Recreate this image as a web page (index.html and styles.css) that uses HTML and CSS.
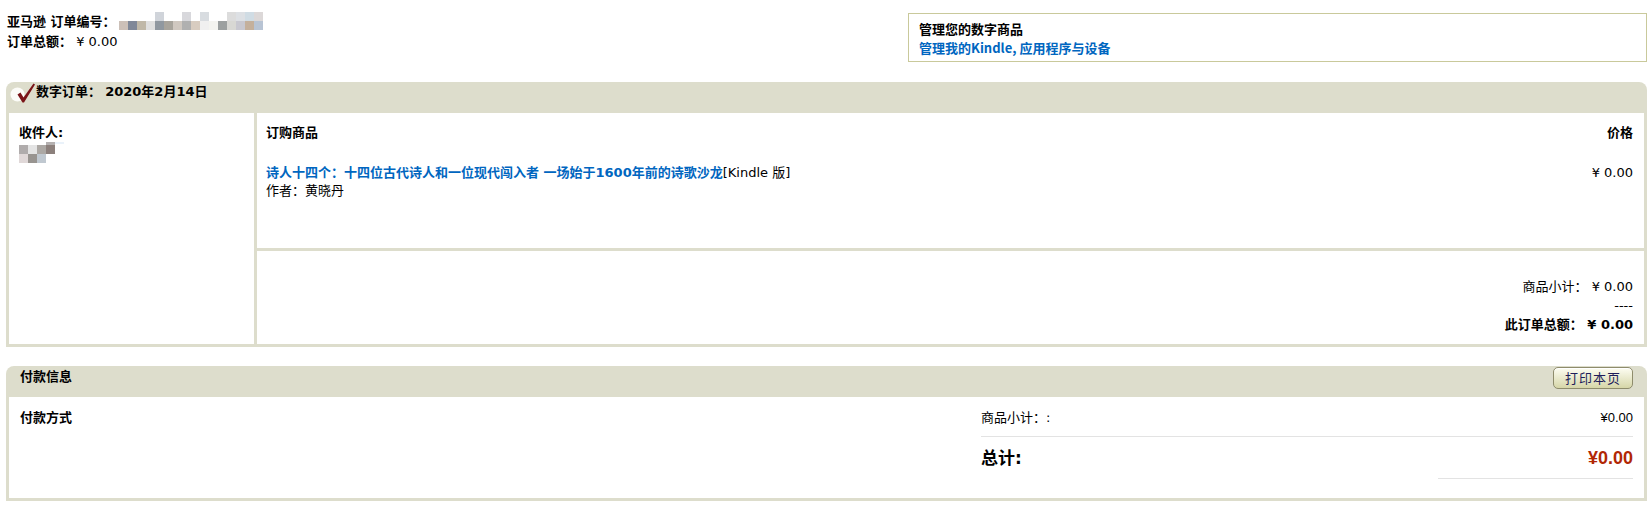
FILE: index.html
```html
<!DOCTYPE html>
<html lang="zh-CN">
<head>
    <meta charset="UTF-8">
    <title>订单详情</title>
    <link rel="stylesheet" href="styles.css">
</head>
<body>

    <div class="top">
        <div class="order-info">
            <div>
                <b>亚马逊 订单编号：</b><svg class="mosaic-order" width="144" height="18" viewBox="0 0 144 18">
                    <rect x="36" y="0" width="9" height="9" fill="#d0d4da"/>
                    <rect x="63" y="0" width="9" height="9" fill="#d8d8dc"/>
                    <rect x="81" y="0" width="9" height="9" fill="#d8dce0"/>
                    <rect x="108" y="0" width="9" height="9" fill="#dcdcdc"/>
                    <rect x="117" y="0" width="9" height="9" fill="#dde0e4"/>
                    <rect x="126" y="0" width="9" height="9" fill="#d0dce4"/>
                    <rect x="135" y="0" width="9" height="9" fill="#dcd8d8"/>
                    <rect x="0" y="9" width="9" height="9" fill="#ccc0b8"/>
                    <rect x="9" y="9" width="9" height="9" fill="#808898"/>
                    <rect x="18" y="9" width="9" height="9" fill="#c0b8a8"/>
                    <rect x="27" y="9" width="9" height="9" fill="#e0e0e0"/>
                    <rect x="36" y="9" width="9" height="9" fill="#9098a0"/>
                    <rect x="45" y="9" width="9" height="9" fill="#a8a49c"/>
                    <rect x="54" y="9" width="9" height="9" fill="#d0c8c0"/>
                    <rect x="63" y="9" width="9" height="9" fill="#b0b0b0"/>
                    <rect x="72" y="9" width="9" height="9" fill="#d8ccc0"/>
                    <rect x="81" y="9" width="9" height="9" fill="#f0f0f0"/>
                    <rect x="90" y="9" width="9" height="9" fill="#f4f4f0"/>
                    <rect x="99" y="9" width="9" height="9" fill="#9ca0a0"/>
                    <rect x="108" y="9" width="9" height="9" fill="#d8d8d4"/>
                    <rect x="117" y="9" width="9" height="9" fill="#c8c8d0"/>
                    <rect x="126" y="9" width="9" height="9" fill="#c4b09c"/>
                    <rect x="135" y="9" width="9" height="9" fill="#b8c4d4"/>
                </svg>
            </div>
            <div><b>订单总额：</b> ¥ 0.00</div>
        </div>
        <div class="manage-box">
            <div class="manage-title">管理您的数字商品</div>
            <a href="#">管理我的Kindle, 应用程序与设备</a>
        </div>
    </div>

    <div class="panel">
        <div class="panel-head">
            <svg class="check" width="25" height="22" viewBox="0 0 25 22">
                <circle cx="7.5" cy="12.5" r="7" fill="#fcfcf8"/>
                <path d="M7.5 12.5 L10.5 10.5 L13.5 15.5 L23.5 1.5 L25 2.5 L14 20.5 L12.5 20.5 Z" fill="#7a1418"/>
            </svg>
            <b>数字订单：</b>&nbsp;<b>2020年2月14日</b>
        </div>
        <div class="order-body">
            <div class="recipient">
                <b>收件人:</b>
                <svg class="mosaic-name" width="45" height="21" viewBox="0 0 45 21">
                    <rect x="27" y="0" width="9" height="3" fill="#b4b0b0"/>
                    <rect x="36" y="0" width="9" height="2" fill="#eaf2fa"/>
                    <rect x="0" y="3" width="9" height="9" fill="#b0acac"/>
                    <rect x="9" y="3" width="9" height="9" fill="#e4e4e4"/>
                    <rect x="18" y="3" width="9" height="9" fill="#aca8a4"/>
                    <rect x="27" y="3" width="9" height="9" fill="#8c807c"/>
                    <rect x="0" y="12" width="9" height="9" fill="#e0d8d8"/>
                    <rect x="9" y="12" width="9" height="9" fill="#989490"/>
                    <rect x="18" y="12" width="9" height="9" fill="#c0c8d0"/>
                </svg>
            </div>
            <div class="order-main">
                <div class="items">
                    <div class="items-head">
                        <span>订购商品</span>
                        <span>价格</span>
                    </div>
                    <div class="item">
                        <div>
                            <a href="#" class="title">诗人十四个：十四位古代诗人和一位现代闯入者 一场始于1600年前的诗歌沙龙</a>[Kindle 版]<br>
                            作者：黄晓丹
                        </div>
                        <div>¥ 0.00</div>
                    </div>
                </div>
                <div class="totals">
                    <div>商品小计： ¥ 0.00</div>
                    <div>----</div>
                    <div class="grand">此订单总额： ¥ 0.00</div>
                </div>
            </div>
        </div>
    </div>

    <div class="panel pay">
        <div class="panel-head">
            <b>付款信息</b>
            <button class="print-btn">打印本页</button>
        </div>
        <div class="pay-body">
            <div class="pay-method"><b>付款方式</b></div>
            <div class="pay-summary">
                <div class="sum-row">
                    <span>商品小计：:</span>
                    <span class="amount">¥0.00</span>
                </div>
                <div class="sum-row total">
                    <span class="total-label">总计:</span>
                    <span class="amount total-amount">¥0.00</span>
                </div>
            </div>
        </div>
    </div>

</body>
</html>
```

FILE: styles.css
```css
* {
    margin: 0;
    padding: 0;
    box-sizing: border-box;
}

body {
    font-family: "DejaVu Sans", "Noto Sans CJK SC", sans-serif;
    font-size: 13px;
    line-height: 19px;
    color: #000;
    background: #fff;
    padding: 0 3px 10px 6px;
}

a {
    color: #0066c0;
    text-decoration: none;
    font-weight: bold;
}

/* top area */
.top {
    display: flex;
    justify-content: space-between;
    align-items: flex-start;
    height: 62px;
}

.order-info {
    padding: 12px 0 0 1px;
    line-height: 20px;
}

.mosaic-order {
    vertical-align: top;
    margin-left: 3px;
}

.manage-box {
    width: 739px;
    margin-top: 13px;
    border: 1px solid #c9c99b;
    padding: 5px 10px 4px;
    font-family: "Noto Sans CJK SC", sans-serif;
}

.manage-title {
    font-weight: bold;
}

/* panels */
.panel {
    margin-top: 20px;
    background: #ddddcc;
    border-radius: 8px 8px 0 0;
    padding: 0 3px 3px;
}

.panel.pay {
    margin-top: 19px;
}

.panel-head {
    height: 31px;
    display: flex;
    align-items: flex-start;
    padding: 0 1px;
}

.check {
    margin-right: 1px;
}

.pay .panel-head {
    justify-content: space-between;
    padding: 1px 11px 0;
}

.order-body {
    display: grid;
    grid-template-columns: 245px 1fr;
    gap: 3px;
}

.recipient {
    background: #fff;
    padding: 10px;
}

.mosaic-name {
    display: block;
}

.order-main {
    display: flex;
    flex-direction: column;
    gap: 3px;
}

.items {
    background: #fff;
    height: 135px;
    padding: 10px 11px 0 9px;
}

.items-head {
    display: flex;
    justify-content: space-between;
    font-weight: bold;
}

.item {
    display: flex;
    justify-content: space-between;
    margin-top: 22px;
    line-height: 18px;
}

.totals {
    background: #fff;
    text-align: right;
    padding: 26px 11px 10px;
}

.totals .grand {
    font-weight: bold;
}

/* payment */
.print-btn {
    width: 80px;
    height: 22px;
    border: 1px solid #8e8c6c;
    border-radius: 5px;
    background: linear-gradient(#fdfdf2, #d6d6a8);
    box-shadow: inset 0 1px 0 #fff;
    font-family: "Noto Sans CJK SC", sans-serif;
    font-size: 13px;
    line-height: 20px;
    letter-spacing: 1px;
    color: #1e1e5a;
    text-align: center;
}

.pay-body {
    background: #fff;
    height: 101px;
    display: grid;
    grid-template-columns: 1fr 652px;
    padding: 11px 11px 0;
}

.sum-row {
    display: grid;
    grid-template-columns: 1fr 195px;
    padding-bottom: 9px;
    border-bottom: 1px solid #e3e3e3;
}

.amount {
    font-family: "Liberation Sans", Arial, sans-serif;
    text-align: right;
}

.sum-row.total {
    border-bottom: none;
    padding-bottom: 0;
}

.total-label {
    font-size: 17px;
    font-weight: bold;
    line-height: 22px;
    padding-top: 10px;
}

.total-amount {
    font-size: 18px;
    font-weight: bold;
    line-height: 22px;
    color: #b12704;
    padding: 10px 0 9px;
    border-bottom: 1px solid #e3e3e3;
}
```
